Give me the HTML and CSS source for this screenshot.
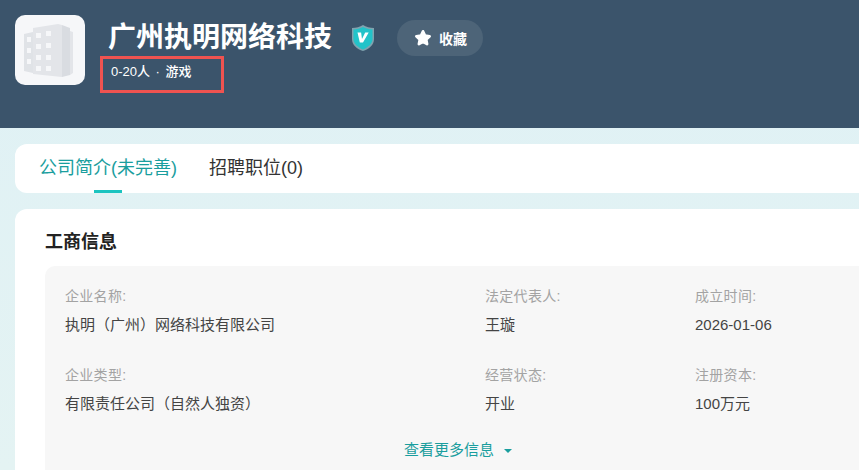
FILE: index.html
```html
<!DOCTYPE html>
<html lang="zh-CN">
<head>
  <meta charset="UTF-8" />
  <title>广州执明网络科技</title>
  <link rel="stylesheet" href="styles.css">
</head>
<body>
  <div class="top">
    <div class="logo">
      <svg width="70" height="70" viewBox="0 0 70 70">
        <path fill="#e0e3e7" d="M9 19l9-2v41l-9-2z"/>
        <path fill="#e3e5e9" d="M18 13l25-4 4 1v52l-29-3z"/>
        <path fill="#d9dce1" d="M47 10l8 3v47l-8 2z"/>
        <path fill="#e3e5e9" d="M55 16l3 1v41l-3 2z"/>
        <g fill="#f6f7f9">
          <rect x="12" y="22" width="4" height="5"/><rect x="12" y="33" width="4" height="5"/><rect x="12" y="44" width="4" height="5"/>
          <rect x="21" y="18" width="5" height="5"/><rect x="31" y="16" width="5" height="5"/>
          <rect x="21" y="29" width="5" height="5"/><rect x="31" y="28" width="5" height="5"/>
          <rect x="21" y="40" width="5" height="5"/><rect x="31" y="40" width="5" height="5"/>
          <rect x="21" y="51" width="5" height="5"/><rect x="31" y="51" width="5" height="5"/>
        </g>
      </svg>
    </div>
    <div class="top-info">
      <div class="title-row">
        <h1>广州执明网络科技</h1>
        <svg class="badge" width="26" height="28" viewBox="0 0 26 28">
          <path fill="#7fa3af" d="M13 1c3 2 7 3 11 3v11c0 6-5 10-11 12C7 25 2 21 2 15V4c4 0 8-1 11-3z"/>
          <path fill="#22c3c9" d="M13 3c3 1.500 6 2.500 9.500 2.500V15c0 5-5 8.500-9.500 10.500C8.500 23.500 3.500 20 3.500 15V5.500C7 5.500 10 4.500 13 3z"/>
          <path fill="#fff" d="M7.500 8.500h3.600l.9 6.500 3.200-6.500h3.500L13 18.500h-3.200z"/>
        </svg>
        <button class="fav-btn">
          <svg width="20" height="20" viewBox="0 0 18 18"><path fill="#fff" stroke="#fff" stroke-width="2.400" stroke-linejoin="round" d="M9 3l1.800 3.900 4.200.5-3.100 2.900.8 4.200L9 12.400l-3.700 2.100.8-4.200L3 7.400l4.200-.5z"/></svg>
          收藏
        </button>
      </div>
      <div class="sub">0-20人<span class="dot">·</span>游戏</div>
    </div>
    <div class="mark"></div>
  </div>

  <div class="content">
    <div class="tabs">
      <div class="tab active">公司简介(未完善)</div>
      <div class="tab">招聘职位(0)</div>
    </div>

    <div class="card">
      <h2>工商信息</h2>
      <div class="info">
        <div class="info-grid">
          <div class="item"><label>企业名称:</label><p>执明（广州）网络科技有限公司</p></div>
          <div class="item"><label>法定代表人:</label><p>王璇</p></div>
          <div class="item"><label>成立时间:</label><p>2026-01-06</p></div>
          <div class="item"><label>企业类型:</label><p>有限责任公司（自然人独资）</p></div>
          <div class="item"><label>经营状态:</label><p>开业</p></div>
          <div class="item"><label>注册资本:</label><p>100万元</p></div>
        </div>
        <div class="more">查看更多信息<span class="arrow"></span></div>
      </div>
    </div>
  </div>
</body>
</html>
```

FILE: styles.css
```css
html, body {
  margin: 0;
  height: 470px;
  overflow: hidden;
}
body {
  width: 859px;
  font-family: "Liberation Sans", "Noto Sans CJK SC", sans-serif;
  background: linear-gradient(#dff1f5, #e4f3f3);
  color: #333;
}
.top {
  position: relative;
  height: 128px;
  box-sizing: border-box;
  padding: 15px;
  background-color: #3b546b;
  display: flex;
  gap: 23px;
}
.logo {
  width: 70px;
  height: 70px;
  border-radius: 10px;
  background-color: #f6f7f9;
}
.logo svg {
  display: block;
}
.title-row {
  display: flex;
  align-items: center;
  height: 46px;
}
h1 {
  margin: 0;
  font-size: 28px;
  line-height: 46px;
  font-weight: 700;
  color: #fff;
}
.badge {
  margin-left: 18px;
}
.fav-btn {
  margin-left: 21px;
  width: 86px;
  height: 36px;
  border: none;
  border-radius: 18px;
  background-color: #4d6478;
  color: #fff;
  font-family: inherit;
  font-size: 14px;
  font-weight: 700;
  display: flex;
  align-items: center;
  justify-content: center;
  gap: 6px;
  padding: 0;
}
.sub {
  margin-top: 2px;
  font-size: 13px;
  line-height: 18px;
  font-weight: 500;
  color: #fff;
  padding-left: 3px;
}
.dot {
  margin: 0 5.500px;
}
.mark {
  position: absolute;
  left: 100px;
  top: 56px;
  width: 124px;
  height: 37px;
  box-sizing: border-box;
  border: 3px solid #ef5350;
}
.content {
  padding: 16px 0 0 15px;
}
.tabs {
  height: 49px;
  background-color: #fff;
  border-radius: 12px 0 0 12px;
  display: flex;
  padding-left: 24px;
  gap: 32px;
}
.tab {
  position: relative;
  font-size: 18px;
  line-height: 49px;
  color: #333;
}
.tab.active {
  color: #1a9e9e;
}
.tab.active::after {
  content: "";
  position: absolute;
  left: 55px;
  bottom: 0;
  width: 28px;
  height: 3px;
  background-color: #1cc4c0;
}
.card {
  margin-top: 16px;
  height: 261px;
  box-sizing: border-box;
  background-color: #fff;
  border-radius: 12px 0 0 0;
  padding: 20px 0 0 30px;
}
h2 {
  margin: 0;
  font-size: 18px;
  line-height: 26px;
  font-weight: 700;
  color: #222;
}
.info {
  margin-top: 11px;
  height: 204px;
  box-sizing: border-box;
  background-color: #f7f7f7;
  border-radius: 10px 0 0 0;
  padding: 20px 0 0 20px;
}
.info-grid {
  display: grid;
  grid-template-columns: 420px 210px 1fr;
  row-gap: 30px;
}
label {
  display: block;
  font-size: 14px;
  line-height: 20px;
  letter-spacing: 0.3px;
  color: #a3a3a3;
}
.item p {
  margin: 9px 0 0;
  font-size: 15px;
  line-height: 20px;
  color: #444;
}
.more {
  margin-top: 26px;
  padding-left: 339px;
  font-size: 15px;
  line-height: 20px;
  color: #1a9e9e;
  display: flex;
  align-items: center;
}
.arrow {
  margin-left: 10px;
  margin-top: 2px;
  border-left: 4px solid transparent;
  border-right: 4px solid transparent;
  border-top: 4px solid #1a9e9e;
}
```
